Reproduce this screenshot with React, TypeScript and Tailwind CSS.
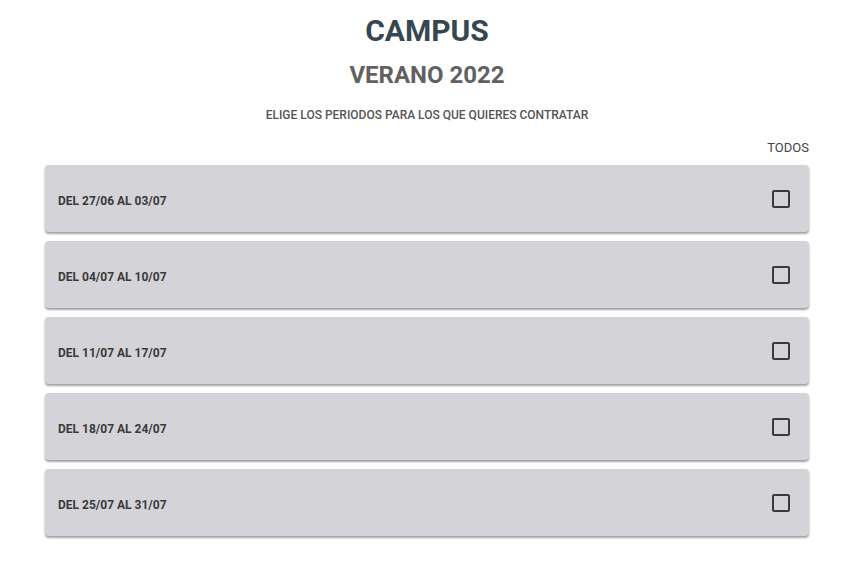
const periods = [
  "DEL 27/06 AL 03/07",
  "DEL 04/07 AL 10/07",
  "DEL 11/07 AL 17/07",
  "DEL 18/07 AL 24/07",
  "DEL 25/07 AL 31/07",
];

function CheckboxBlank() {
  return (
    <svg width="24" height="24" viewBox="0 0 24 24" className="text-[#3b3b3b]" aria-hidden>
      <path
        fill="currentColor"
        d="M19 5v14H5V5h14m0-2H5c-1.1 0-2 .9-2 2v14c0 1.1.9 2 2 2h14c1.1 0 2-.9 2-2V5c0-1.1-.9-2-2-2z"
      />
    </svg>
  );
}

function PeriodRow({ label }: { label: string }) {
  return (
    <div className="flex h-[67px] items-center justify-between rounded-[4px] bg-[#d4d3d8] pl-[13px] pr-[16px] shadow-[0_2px_2px_rgba(0,0,0,0.3),0_1px_3px_rgba(0,0,0,0.12)]">
      <span className="pt-[4px] text-[12px] font-bold text-[#3a3a3a]">{label}</span>
      <CheckboxBlank />
    </div>
  );
}

export default function App() {
  return (
    <div className="min-h-[572px] bg-white font-['Roboto',sans-serif]">
      <div className="ml-[45px] w-[764px] pt-[13px]">
        <h1 className="text-center text-[30px] font-bold leading-[36px] text-[#37474f]">CAMPUS</h1>
        <h2 className="mt-[11px] text-center text-[24px] font-bold leading-[30px] text-[#616161]">VERANO 2022</h2>
        <p className="mt-[17px] text-center text-[12px] font-medium leading-[16px] text-[#555]">
          ELIGE LOS PERIODOS PARA LOS QUE QUIERES CONTRATAR
        </p>
        <div className="mt-[17px] text-right text-[13px] leading-[16px] text-[#444]">TODOS</div>
        <div className="mt-[9px] flex flex-col gap-[9px]">
          {periods.map((p) => (
            <PeriodRow key={p} label={p} />
          ))}
        </div>
      </div>
    </div>
  );
}
